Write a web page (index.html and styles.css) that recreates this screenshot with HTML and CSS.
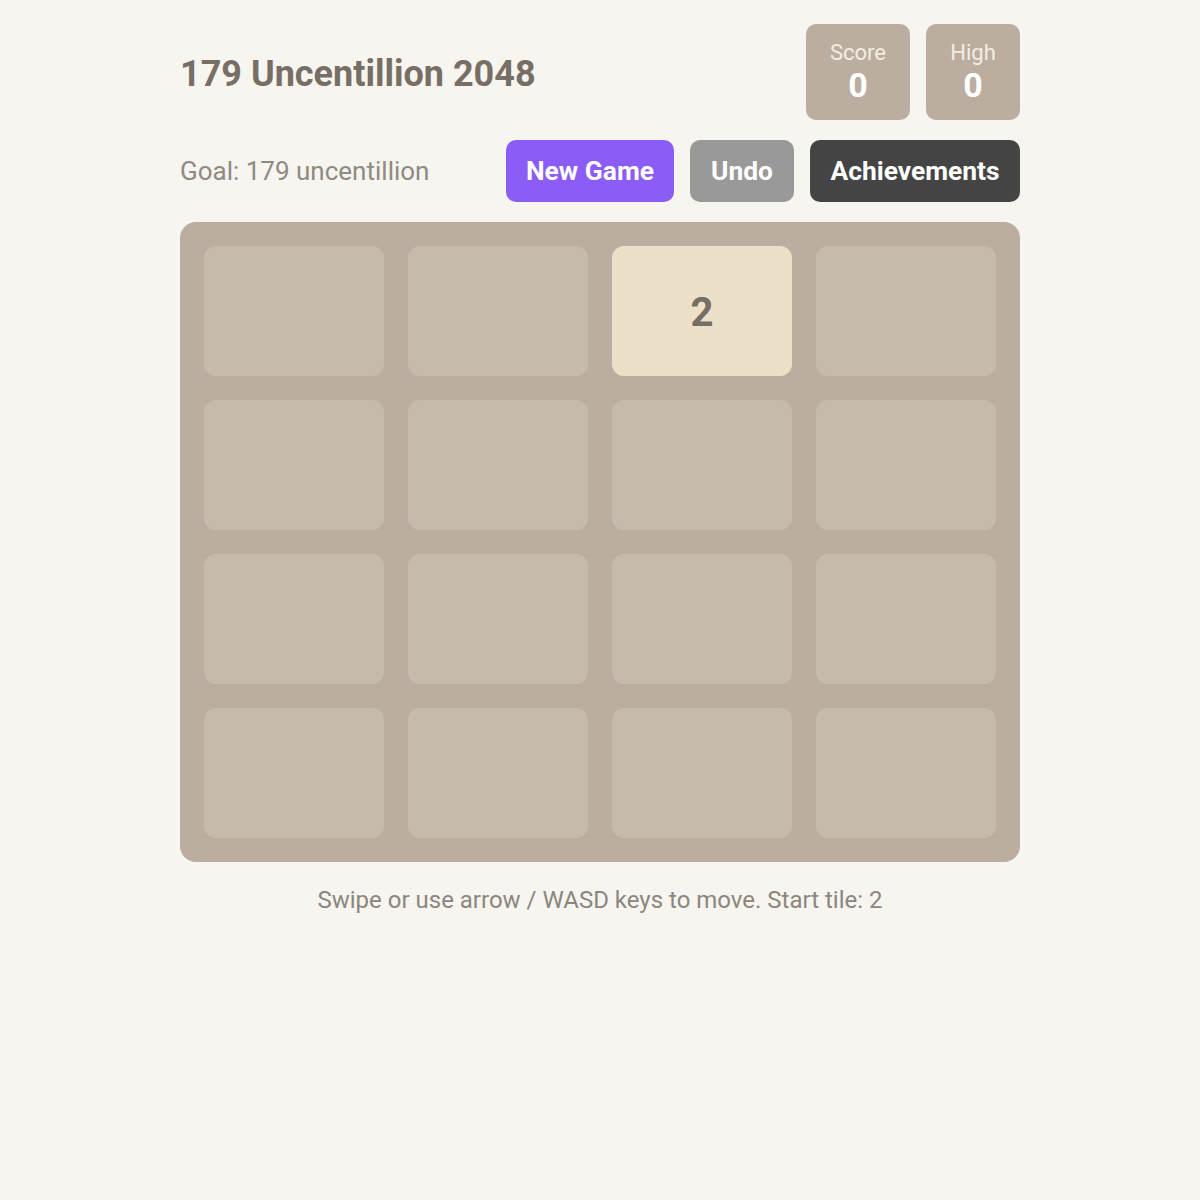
FILE: index.html
```html
<!DOCTYPE html>
<html>
<head>
<meta charset="utf-8">
<link rel="stylesheet" href="styles.css">
</head>
<body>
<div class="app">
  <header class="top">
    <h1 class="title">179 Uncentillion 2048</h1>
    <div class="scores">
      <div class="score-box score"><div class="label">Score</div><div class="value">0</div></div>
      <div class="score-box high"><div class="label">High</div><div class="value">0</div></div>
    </div>
  </header>
  <div class="controls">
    <div class="goal">Goal: 179 uncentillion</div>
    <div class="buttons">
      <button class="btn btn-new">New Game</button>
      <button class="btn btn-undo">Undo</button>
      <button class="btn btn-ach">Achievements</button>
    </div>
  </div>
  <div class="board">
    <div class="cell"></div><div class="cell"></div><div class="cell tile-2">2</div><div class="cell"></div>
    <div class="cell"></div><div class="cell"></div><div class="cell"></div><div class="cell"></div>
    <div class="cell"></div><div class="cell"></div><div class="cell"></div><div class="cell"></div>
    <div class="cell"></div><div class="cell"></div><div class="cell"></div><div class="cell"></div>
  </div>
  <p class="hint">Swipe or use arrow / WASD keys to move. Start tile: 2</p>
</div>
</body>
</html>
```

FILE: styles.css
```css
* { box-sizing: border-box; }
html, body { margin: 0; padding: 0; }
body {
  background: #f7f5ef;
  font-family: Roboto, "Liberation Sans", Arial, sans-serif;
  color: #776e65;
}
.app {
  width: 840px;
  margin: 0 auto;
  padding-top: 24px;
}
.top {
  display: flex;
  justify-content: space-between;
  align-items: center;
  height: 96px;
}
.title {
  margin: 0;
  font-size: 36px;
  font-weight: 700;
  color: #776e65;
  padding-top: 4px;
}
.scores { display: flex; gap: 16px; }
.score-box {
  background: #bbada0;
  border-radius: 10px;
  height: 96px;
  display: flex;
  flex-direction: column;
  align-items: center;
  justify-content: center;
}
.score { width: 104px; }
.high { width: 94px; }
.label {
  font-size: 22px;
  color: #f4ede2;
  line-height: 26px;
}
.value {
  font-size: 34px;
  font-weight: 700;
  color: #ffffff;
  line-height: 38px;
}
.controls {
  display: flex;
  justify-content: space-between;
  align-items: center;
  margin-top: 20px;
  height: 62px;
}
.goal {
  font-size: 26px;
  color: #8f8a82;
}
.buttons { display: flex; gap: 16px; }
.btn {
  border: none;
  height: 62px;
  border-radius: 10px;
  font-family: Roboto, "Liberation Sans", Arial, sans-serif;
  font-size: 26.4px;
  font-weight: 700;
  color: #ffffff;
  padding: 0;
  cursor: pointer;
}
.btn-new { width: 168px; background: #8b5cf6; }
.btn-undo { width: 104px; background: #999999; }
.btn-ach { width: 210px; background: #444444; }
.board {
  margin-top: 20px;
  background: #bbada0;
  border-radius: 16px;
  padding: 24px;
  display: grid;
  grid-template-columns: repeat(4, 180px);
  grid-auto-rows: 130px;
  gap: 24px;
}
.cell {
  background: #c6baad;
  border-radius: 12px;
  display: flex;
  align-items: center;
  justify-content: center;
}
.tile-2 {
  background: #ede0c8;
  color: #776e65;
  font-size: 40px;
  font-weight: 700;
  padding-top: 2px;
}
.hint {
  margin: 24px 0 0;
  text-align: center;
  font-size: 24px;
  color: #8c867e;
}
```
